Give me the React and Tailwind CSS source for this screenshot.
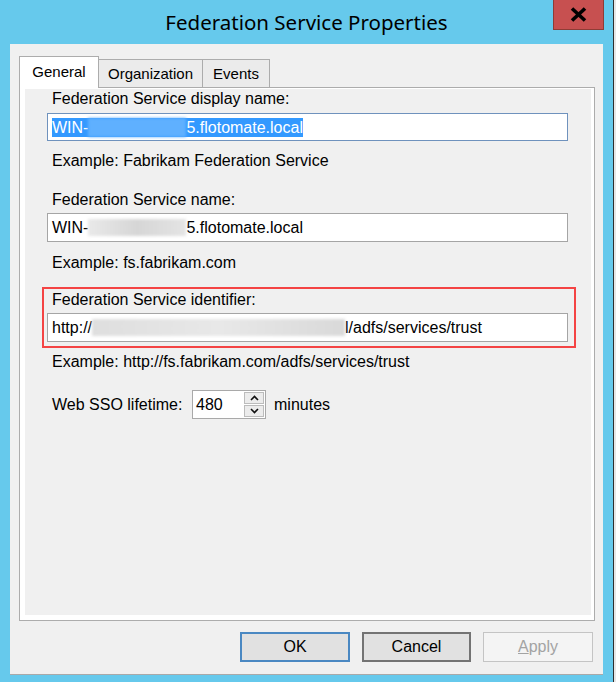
function Chevron({ up }) {
  return (
    <svg width="9" height="6" viewBox="0 0 9 6">
      <polyline
        points={up ? "1,5 4.5,1.5 8,5" : "1,1 4.5,4.5 8,1"}
        fill="none"
        stroke="#111"
        strokeWidth="1.6"
      />
    </svg>
  );
}

export default function App() {
  return (
    <div className="w-[616px] h-[682px] bg-[#66c9ec] flex overflow-hidden font-['Liberation_Sans',Arial,sans-serif] text-[16px] text-black">
      <div className="w-[613px] flex flex-col">
        {/* Title bar */}
        <div className="h-[44px] relative flex items-center justify-center">
          <span className="font-['Noto_Sans',sans-serif] text-[20.5px] text-black">
            Federation Service Properties
          </span>
          <div className="absolute left-[553px] top-0 w-[51px] h-[30px] bg-[#c75050] border border-t-0 border-[#8e3c36] flex items-center justify-center">
            <svg width="17" height="15" viewBox="0 0 17 15">
              <line x1="2" y1="1.5" x2="15" y2="13.5" stroke="#000" strokeWidth="3.6" />
              <line x1="15" y1="1.5" x2="2" y2="13.5" stroke="#000" strokeWidth="3.6" />
            </svg>
          </div>
        </div>

        {/* Client area */}
        <div className="ml-[10px] w-[593px] h-[631px] bg-[#f0f0f0] border-b border-[#a9a9a9] flex flex-col">
          {/* Tabs */}
          <div className="mt-[12px] ml-[9px] h-[32px] flex items-end relative z-10 text-[15px]">
            <div className="w-[80px] h-[32px] bg-white border border-b-0 border-[#acacac] flex items-center justify-center pb-[1px]">
              General
            </div>
            <div className="w-[104px] h-[28px] mb-[1px] bg-[#ebebeb] border border-b-0 border-l-0 border-[#acacac] flex items-center justify-center pt-[1px]">
              Organization
            </div>
            <div className="w-[67px] h-[28px] mb-[1px] bg-[#ebebeb] border border-b-0 border-l-0 border-[#acacac] flex items-center justify-center pt-[1px]">
              Events
            </div>
          </div>

          {/* Tab panel */}
          <div className="ml-[9px] mt-[-1px] w-[576px] h-[534px] border border-[#acacac] bg-white pl-[5px] pr-[3px] pt-[1px] pb-[5px] flex">
            <div className="flex-1 bg-[#f0f0f0] flex flex-col">
              <div className="ml-[27px] h-[20px] leading-[20px]">Federation Service display name:</div>
              <div className="mt-[4px] ml-[22px] w-[521px] h-[28px] border border-[#6f92bd] bg-white flex items-center pl-[4px]">
                <span className="bg-[#3399ff] text-white leading-[19px] h-[19px] flex items-center">
                  <span>WIN-</span>
                  <span className="inline-block w-[98px] h-[19px] bg-[#5fb0ff] blur-[1.5px]"></span>
                  <span>5.flotomate.local</span>
                </span>
              </div>
              <div className="mt-[10px] ml-[27px] h-[20px] leading-[20px]">Example: Fabrikam Federation Service</div>

              <div className="mt-[19px] ml-[27px] h-[20px] leading-[20px]">Federation Service name:</div>
              <div className="mt-[3px] ml-[22px] w-[521px] h-[29px] border border-[#a5a5a5] bg-white flex items-center pl-[4px]">
                <span>WIN-</span>
                <span className="inline-block w-[98px] h-[17px] bg-gradient-to-r from-[#e9e9e9] via-[#d6d6d6] to-[#e4e4e4] blur-[1.5px]"></span>
                <span>5.flotomate.local</span>
              </div>
              <div className="mt-[11px] ml-[27px] h-[20px] leading-[20px]">Example: fs.fabrikam.com</div>

              <div className="mt-[14px] ml-[17px] w-[534px] border-2 border-[#f44444] pt-[1px] pl-[3px] pb-[4px] flex flex-col">
                <div className="ml-[5px] h-[20px] leading-[20px]">Federation Service identifier:</div>
                <div className="mt-[3px] w-[521px] h-[29px] border border-[#a5a5a5] bg-white flex items-center pl-[4px]">
                  <span>http://</span>
                  <span className="inline-block w-[253px] h-[17px] bg-gradient-to-r from-[#dedede] via-[#e8e8e8] to-[#d9d9d9] blur-[1.5px]"></span>
                  <span>l/adfs/services/trust</span>
                </div>
              </div>
              <div className="mt-[4px] ml-[27px] h-[20px] leading-[20px]">Example: http://fs.fabrikam.com/adfs/services/trust</div>

              <div className="mt-[18px] ml-[27px] h-[29px] flex items-center">
                <div className="w-[140px]">Web SSO lifetime:</div>
                <div className="h-[29px] w-[74px] border border-[#a9a9a9] bg-white flex">
                  <div className="w-[50px] flex items-center pl-[3px]">480</div>
                  <div className="flex-1 flex flex-col gap-[1px] p-[1px] bg-white">
                    <div className="flex-1 bg-[#ececec] border border-[#bcbcbc] flex items-center justify-center">
                      <Chevron up />
                    </div>
                    <div className="flex-1 bg-[#ececec] border border-[#bcbcbc] flex items-center justify-center">
                      <Chevron />
                    </div>
                  </div>
                </div>
                <div className="ml-[8px]">minutes</div>
              </div>
            </div>
          </div>

          {/* Buttons */}
          <div className="mt-[11px] flex justify-end gap-[12px] pr-[10px]">
            <div className="w-[110px] h-[30px] bg-[#e1e1e1] border-2 border-[#4a88c2] flex items-center justify-center">
              OK
            </div>
            <div className="w-[109px] h-[30px] bg-[#e1e1e1] border-2 border-[#737373] flex items-center justify-center">
              Cancel
            </div>
            <div className="w-[110px] h-[30px] bg-[#f4f4f4] border border-[#c4c4c4] flex items-center justify-center text-[#a3a3a3]">
              <span><span className="underline">A</span>pply</span>
            </div>
          </div>
        </div>
      </div>
      <div className="w-[1px] bg-[#2e2e2e]"></div>
      <div className="w-[2px] bg-[#e6e6e6]"></div>
    </div>
  );
}
